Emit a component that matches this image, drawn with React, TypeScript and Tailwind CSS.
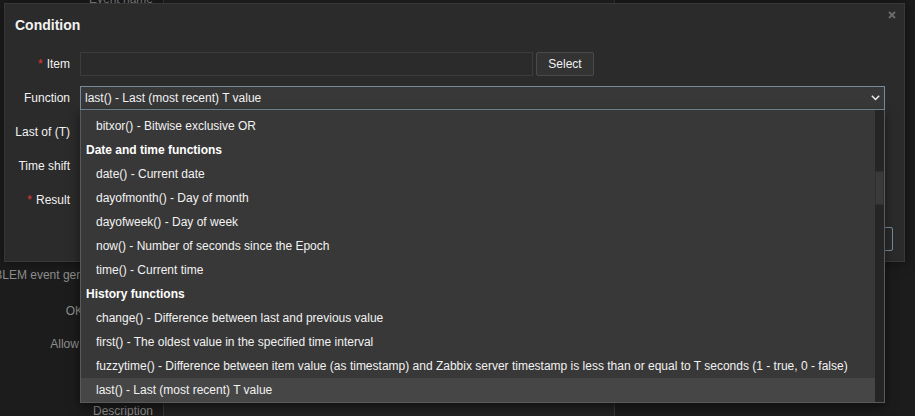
import React from "react";

type Row = { kind: "group" | "item"; text: string; active?: boolean };

const rows: Row[] = [
  { kind: "item", text: "bitxor() - Bitwise exclusive OR" },
  { kind: "group", text: "Date and time functions" },
  { kind: "item", text: "date() - Current date" },
  { kind: "item", text: "dayofmonth() - Day of month" },
  { kind: "item", text: "dayofweek() - Day of week" },
  { kind: "item", text: "now() - Number of seconds since the Epoch" },
  { kind: "item", text: "time() - Current time" },
  { kind: "group", text: "History functions" },
  { kind: "item", text: "change() - Difference between last and previous value" },
  { kind: "item", text: "first() - The oldest value in the specified time interval" },
  {
    kind: "item",
    text: "fuzzytime() - Difference between item value (as timestamp) and Zabbix server timestamp is less than or equal to T seconds (1 - true, 0 - false)",
  },
  { kind: "item", text: "last() - Last (most recent) T value", active: true },
];

function BgRow({ label, mt, children }: { label: string; mt: string; children?: React.ReactNode }) {
  return (
    <div className={`grid grid-cols-[153px_452px] gap-x-[10px] ${mt}`}>
      <div className="h-[24px] flex items-center justify-end whitespace-nowrap text-[#8e8e8e]">{label}</div>
      <div>{children}</div>
    </div>
  );
}

function Label({ text, required }: { text: string; required?: boolean }) {
  return (
    <div className="h-[24px] flex items-center justify-end whitespace-nowrap text-[#f2f2f2]">
      {required && <span className="text-[#e33734] mr-[4px]">*</span>}
      {text}
    </div>
  );
}

export default function App() {
  return (
    <div className="relative h-[416px] w-[915px] overflow-hidden bg-[#1c1c1c] text-[12px] leading-[14px] font-['Liberation_Sans',Arial,sans-serif]">
      {/* Background page form */}
      <div className="flex flex-col mt-[-13px]">
        <BgRow label="Event name" mt="mt-0">
          <div className="h-[24px] bg-[#222222] border border-[#383838]" />
        </BgRow>
        <BgRow label="PROBLEM event generation mode" mt="mt-[252px]" />
        <BgRow label="OK event closes" mt="mt-[12px]" />
        <BgRow label="Allow manual close" mt="mt-[9px]" />
        <BgRow label="URL" mt="mt-[10px]" />
        <BgRow label="Description" mt="mt-[9px]">
          <div className="h-[60px] bg-[#222222] border border-[#383838]" />
        </BgRow>
      </div>

      {/* Dialog */}
      <div className="absolute left-[4px] top-[3px] w-[901px] h-[259px] bg-[#2b2b2b] border border-[#383838] shadow-[0_0_12px_rgba(0,0,0,0.5)]">
        <div className="pt-[13px] pl-[10px] text-[14px] leading-[16px] font-bold text-[#f2f2f2]">Condition</div>
        <button className="absolute right-[8px] top-[7px] w-[8px] h-[8px]" aria-label="Close">
          <svg width="8" height="8" viewBox="0 0 8 8">
            <path d="M1 1 L7 7 M7 1 L1 7" stroke="#6a6a6a" strokeWidth="2" />
          </svg>
        </button>

        <div className="mt-[19px] pl-[10px] pr-[19px] grid grid-cols-[55px_1fr] gap-x-[10px] gap-y-[10px]">
          <Label text="Item" required />
          <div className="flex gap-[3px]">
            <div className="w-[453px] h-[24px] bg-[#2b2b2b] border border-[#3c3c3c]" />
            <button className="w-[58px] h-[24px] bg-[#333333] border border-[#4a4a4a] rounded-[2px] text-[#f2f2f2]">Select</button>
          </div>

          <Label text="Function" />
          <div className="relative">
            <div className="h-[24px] bg-[#383838] border border-[#768d99] flex items-center pl-[4px] text-[#f2f2f2]">
              last() - Last (most recent) T value
              <svg className="absolute right-[5px] top-[9px]" width="9" height="6" viewBox="0 0 9 6">
                <path d="M0.8 0.8 L4.5 4.6 L8.2 0.8" fill="none" stroke="#f2f2f2" strokeWidth="1.4" />
              </svg>
            </div>
            {/* Dropdown list */}
            <div className="absolute left-0 top-full z-10 w-full h-[293px] bg-[#383838] border border-t-0 border-[#5a5a5a] flex shadow-[0_4px_10px_rgba(0,0,0,0.5)]">
              <div className="flex-1 overflow-hidden pt-[4px]">
                {rows.map((r, i) => (
                  <div
                    key={i}
                    className={`h-[24px] flex items-center whitespace-nowrap ${
                      r.kind === "group" ? "pl-[5px] font-bold text-white" : "pl-[15px] text-[#f2f2f2]"
                    } ${r.active ? "bg-[#464646]" : ""}`}
                  >
                    {r.text}
                  </div>
                ))}
              </div>
              <div className="w-[9px] bg-[#252525] pt-[61px]">
                <div className="h-[34px] bg-[#3a3a3a] border border-[#2e2e2e]" />
              </div>
            </div>
          </div>

          <Label text="Last of (T)" />
          <div className="h-[24px] bg-[#2b2b2b] border border-[#3c3c3c] w-[200px]" />

          <Label text="Time shift" />
          <div className="h-[24px] bg-[#2b2b2b] border border-[#3c3c3c] w-[200px]" />

          <Label text="Result" required />
          <div className="h-[24px] bg-[#2b2b2b] border border-[#3c3c3c] w-[200px]" />
        </div>

        <div className="mt-[15px] pr-[11px] flex justify-end gap-[10px]">
          <button className="h-[24px] px-[11px] bg-[#4796c4] border border-[#4796c4] rounded-[2px] text-white">Add</button>
          <button className="h-[24px] px-[11px] bg-transparent border border-[#768d99] rounded-[2px] text-[#768d99]">Cancel</button>
        </div>
      </div>
    </div>
  );
}
